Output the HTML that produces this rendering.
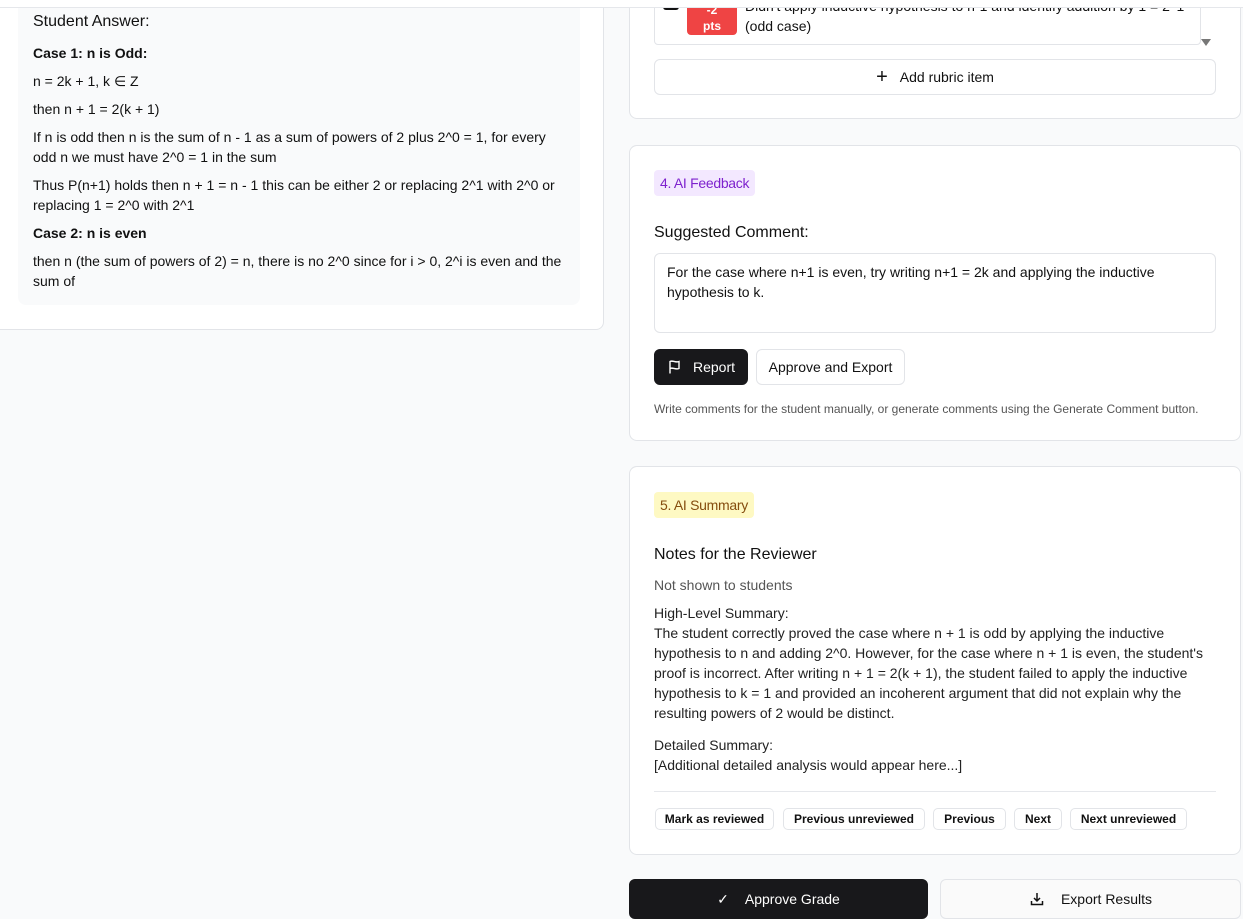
<!DOCTYPE html>
<html><head><meta charset="utf-8"><style>
*{box-sizing:border-box;margin:0;padding:0}
body{width:1243px;height:918px;overflow:hidden;background:#f9fafb;font-family:"Liberation Sans",Arial,sans-serif;color:#111;position:relative}
.topline{position:absolute;left:0;top:0;width:1243px;height:8px;background:#fff;border-bottom:1px solid #e5e7eb;z-index:5}
.card{position:absolute;background:#fff;border:1px solid #e2e4e8;border-radius:8px}
.lp{font-size:14px;line-height:20px;margin-bottom:8px}
.badge{display:inline-block;font-size:14px;padding:5px 6px;border-radius:4px;letter-spacing:-0.3px}
.btn{position:absolute;border:1px solid #e2e4e8;border-radius:6px;background:#fff;font-size:14px;display:flex;align-items:center;justify-content:center}
.sb{position:absolute;top:808px;height:22px;border:1px solid #e2e4e8;border-radius:5px;font-size:12px;font-weight:bold;display:flex;align-items:center;justify-content:center}
</style></head><body>
<div class="topline"></div>
<div class="card" style="left:-10px;top:-10px;width:614px;height:340px"></div>
<div style="position:absolute;left:18px;top:-10px;width:562px;height:315px;background:#f9fafb;border-radius:8px"></div>
<div style="position:absolute;left:33px;top:11px;width:540px">
<div style="font-size:16px;margin-bottom:12px;margin-top:2px">Student Answer:</div>
<div class="lp"><b>Case 1: n is Odd:</b></div>
<div class="lp">n = 2k + 1, k ∈ Z</div>
<div class="lp">then n + 1 = 2(k + 1)</div>
<div class="lp">If n is odd then n is the sum of n - 1 as a sum of powers of 2 plus 2^0 = 1, for every odd n we must have 2^0 = 1 in the sum</div>
<div class="lp">Thus P(n+1) holds then n + 1 = n - 1 this can be either 2 or replacing 2^1 with 2^0 or replacing 1 = 2^0 with 2^1</div>
<div class="lp"><b>Case 2: n is even</b></div>
<div class="lp">then n (the sum of powers of 2) = n, there is no 2^0 since for i &gt; 0, 2^i is even and the sum of</div>
</div>

<div class="card" style="left:629px;top:-10px;width:612px;height:129px"></div>
<div style="position:absolute;left:654px;top:-10px;width:547px;height:55px;border:1px solid #e2e4e8;border-radius:4px;background:#fff"></div>
<div style="position:absolute;left:663px;top:-4px;width:16px;height:14px;background:#111;border-radius:3px"></div>
<div style="position:absolute;left:687px;top:-6px;width:50px;height:41px;background:#ef4444;border-radius:4px;color:#fff;font-size:12px;font-weight:bold;text-align:center;line-height:16px;padding-top:8px">-2<br>pts</div>
<div style="position:absolute;left:745px;top:-4px;font-size:14px;line-height:20px;z-index:1">Didn't apply inductive hypothesis to n-1 and identify addition by 1 = 2^1<br>(odd case)</div>
<div style="position:absolute;left:1201px;top:39px;width:0;height:0;border-left:5px solid transparent;border-right:5px solid transparent;border-top:7px solid #777"></div>
<div class="btn" style="left:654px;top:59px;width:562px;height:36px"><span style="font-size:20px;margin-right:12px">+</span>Add rubric item</div>

<div class="card" style="left:629px;top:145px;width:612px;height:296px"></div>
<div style="position:absolute;left:654px;top:170px"><span class="badge" style="background:#f3e8ff;color:#7e22ce">4. AI Feedback</span></div>
<div style="position:absolute;left:654px;top:224px;font-size:16px">Suggested Comment:</div>
<div style="position:absolute;left:654px;top:253px;width:562px;height:80px;border:1px solid #e2e4e8;border-radius:6px;padding:8px 12px;font-size:14px;line-height:20px">For the case where n+1 is even, try writing n+1 = 2k and applying the inductive hypothesis to k.</div>
<div class="btn" style="left:654px;top:349px;width:94px;height:36px;background:#18181b;color:#fff;border-color:#18181b"><svg width="16" height="16" viewBox="0 0 16 16" style="margin-right:10px" fill="none" stroke="#fff" stroke-width="1.4"><path d="M3 14.5V2.5c3-1.5 5 1.5 9 0v7c-4 1.5-6-1.5-9 0"/></svg>Report</div>
<div class="btn" style="left:756px;top:349px;width:149px;height:36px">Approve and Export</div>
<div style="position:absolute;left:654px;top:402px;font-size:12px;color:#555">Write comments for the student manually, or generate comments using the Generate Comment button.</div>

<div class="card" style="left:629px;top:466px;width:612px;height:389px"></div>
<div style="position:absolute;left:654px;top:492px"><span class="badge" style="background:#fef9c3;color:#854d0e">5. AI Summary</span></div>
<div style="position:absolute;left:654px;top:546px;font-size:16px">Notes for the Reviewer</div>
<div style="position:absolute;left:654px;top:577px;font-size:14px;color:#555">Not shown to students</div>
<div style="position:absolute;left:654px;top:603px;width:556px;font-size:14px;line-height:20px;color:#222">High-Level Summary:<br>The student correctly proved the case where n + 1 is odd by applying the inductive hypothesis to n and adding 2^0. However, for the case where n + 1 is even, the student's proof is incorrect. After writing n + 1 = 2(k + 1), the student failed to apply the inductive hypothesis to k = 1 and provided an incoherent argument that did not explain why the resulting powers of 2 would be distinct.
<div style="margin-top:12px">Detailed Summary:<br>[Additional detailed analysis would appear here...]</div></div>
<div style="position:absolute;left:654px;top:791px;width:562px;height:1px;background:#e5e7eb"></div>
<div class="sb" style="left:655px;width:119px">Mark as reviewed</div>
<div class="sb" style="left:783px;width:142px">Previous unreviewed</div>
<div class="sb" style="left:933px;width:73px">Previous</div>
<div class="sb" style="left:1014px;width:48px">Next</div>
<div class="sb" style="left:1070px;width:117px">Next unreviewed</div>

<div class="btn" style="left:629px;top:879px;width:299px;height:40px;background:#18181b;color:#fff;border-color:#18181b"><span style="margin-right:16px">✓</span>Approve Grade</div>
<div class="btn" style="left:940px;top:879px;width:301px;height:40px;background:#fafafa"><svg width="16" height="16" viewBox="0 0 16 16" style="margin-right:16px" fill="none" stroke="#111" stroke-width="1.5"><path d="M8 2v8M5 7l3 3 3-3M2.5 10v3.5h11V10"/></svg>Export Results</div>
</body></html>
